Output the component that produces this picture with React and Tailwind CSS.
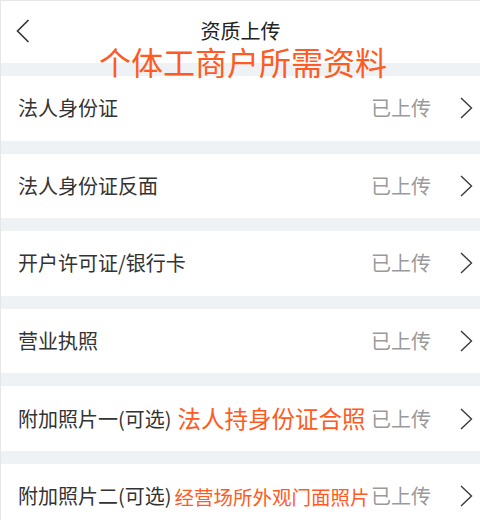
import React from "react";

const font = { fontFamily: '"Noto Sans CJK SC", "Noto Sans", sans-serif' };

function Chevron() {
  return (
    <svg width="14" height="22" viewBox="0 0 14 22" className="shrink-0">
      <polyline points="2,1 12.5,11 2,21" fill="none" stroke="#3a3a3a" strokeWidth="1.4" />
    </svg>
  );
}

function Band() {
  return <div className="h-[13px] bg-[#eff2f5]" />;
}

function Row({ label, note, noteClass }) {
  return (
    <div className="h-[64.6px] flex items-center pl-[17px] pr-[7px] bg-white">
      <span className="text-[20px] leading-none text-[#333333] whitespace-nowrap">{label}</span>
      {note && (
        <span className={"leading-none text-[#ff5a22] whitespace-nowrap " + noteClass}>{note}</span>
      )}
      <span className="flex-1" />
      <span className="text-[20px] leading-none text-[#9a9a9a] whitespace-nowrap">已上传</span>
      <span className="ml-[28px] flex items-center">
        <Chevron />
      </span>
    </div>
  );
}

export default function App() {
  return (
    <div style={font} className="w-[480px] h-[520px] overflow-hidden bg-white border-l border-t border-[#e6e6e6] relative">
      <div className="h-[62px] flex items-center justify-center relative">
        <svg width="14" height="24" viewBox="0 0 14 24" className="absolute left-[15px] top-[18px]">
          <polyline points="12.5,1 1.5,12 12.5,23" fill="none" stroke="#333333" strokeWidth="1.6" />
        </svg>
        <span className="text-[20px] leading-none text-[#222222] -mt-[2px]">资质上传</span>
      </div>
      <Band />
      <Row label="法人身份证" />
      <Band />
      <Row label="法人身份证反面" />
      <Band />
      <Row label="开户许可证/银行卡" />
      <Band />
      <Row label="营业执照" />
      <Band />
      <Row label="附加照片一(可选)" note="法人持身份证合照" noteClass="text-[23.5px] ml-[6px]" />
      <Band />
      <Row label="附加照片二(可选)" note="经营场所外观门面照片" noteClass="text-[19.5px] ml-[3px]" />
      <div className="absolute left-[98px] top-[44px] text-[32px] leading-none text-[#ff5a22] whitespace-nowrap">
        个体工商户所需资料
      </div>
    </div>
  );
}
